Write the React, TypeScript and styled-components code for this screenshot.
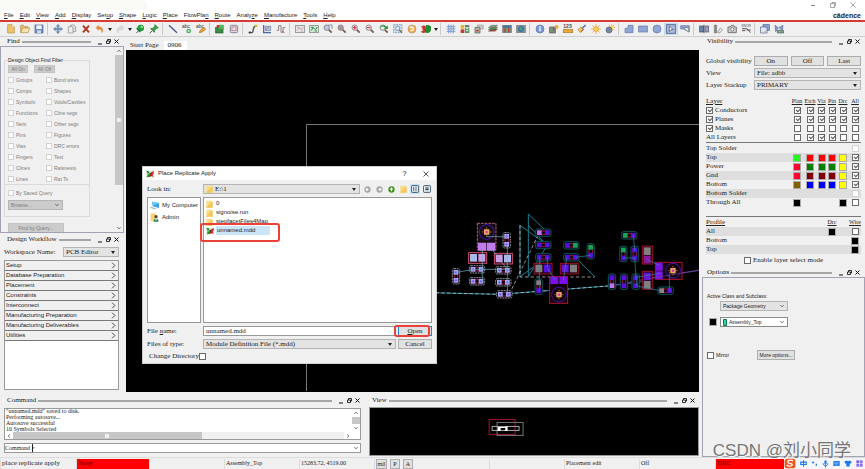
import React from "react";
import styled, { createGlobalStyle, css } from "styled-components";

const serif = `"Liberation Serif", serif`;
const sans = `"Liberation Sans", "Noto Sans CJK SC", sans-serif`;

const GlobalStyle = createGlobalStyle`
  * { box-sizing: border-box; }
  body { margin: 0; background: #f0f0f0; color: #222; font: 7px/9px ${serif}; }
  button, input, select { font: inherit; color: inherit; margin: 0; padding: 0; border-radius: 0; }
  svg { display: block; flex: none; }
`;

/* ---------- shared controls ---------- */

const Page = styled.div`
  position: relative;
  min-height: 100vh;
  display: flex;
  flex-direction: column;
  overflow: hidden;
`;

const Button = styled.button<{ $w?: number; $muted?: boolean }>`
  width: ${(p) => (p.$w ? `${p.$w}px` : "auto")};
  height: 10px;
  line-height: 8px;
  border: 1px solid ${(p) => (p.$muted ? "#c4c4c4" : "#adadad")};
  background: ${(p) => (p.$muted ? "#cccccc" : "#e1e1e1")};
  color: ${(p) => (p.$muted ? "#7c7c7c" : "inherit")};
  text-align: center;
  white-space: nowrap;
`;

const Check = styled.input.attrs({ type: "checkbox" })<{ $faint?: boolean; $size?: number }>`
  appearance: none;
  position: relative;
  flex: none;
  display: block;
  width: ${(p) => p.$size ?? 7}px;
  height: ${(p) => p.$size ?? 7}px;
  border: 1px solid ${(p) => (p.$faint ? "#d2d2d2" : "#6a6a6a")};
  background: #fff;
  &:checked::after {
    content: "";
    position: absolute;
    left: 1px;
    top: 0;
    width: 4px;
    height: 2px;
    border-left: 1px solid #555;
    border-bottom: 1px solid #555;
    transform: rotate(-45deg);
  }
`;

const CheckLabel = styled.label<{ $muted?: boolean }>`
  display: flex;
  align-items: center;
  gap: 2px;
  white-space: nowrap;
  color: ${(p) => (p.$muted ? "#7c7c7c" : "inherit")};
`;

const SelectFrame = styled.div<{ $w?: number; $tone?: "muted" | "white" }>`
  display: flex;
  align-items: center;
  height: 10px;
  padding: 0 3px 0 2px;
  gap: 2px;
  border: 1px solid ${(p) => (p.$tone === "white" ? "#8a8a8a" : "#b4b4b4")};
  background: ${(p) => (p.$tone === "white" ? "#fff" : p.$tone === "muted" ? "#cccccc" : "#e3e3e3")};
  color: ${(p) => (p.$tone === "muted" ? "#7c7c7c" : "inherit")};
  ${(p) => (p.$w ? css`width: ${p.$w}px;` : css`flex: 1; min-width: 0;`)}
`;

const NativeSelect = styled.select`
  appearance: none;
  flex: 1;
  min-width: 0;
  height: 8px;
  line-height: 8px;
  border: 0;
  outline: 0;
  background: transparent;
`;

const Caret = () => (
  <svg width="4" height="3" viewBox="0 0 4 3"><path d="M0 0h4L2 3z" fill="#222" /></svg>
);
const Chevron = ({ dir = "down", size = 4 }: { dir?: "up" | "down" | "left" | "right"; size?: number }) => {
  const d = { down: "M1 3l4 4 4-4", up: "M1 7l4-4 4 4", left: "M7 1L3 5l4 4", right: "M3 1l4 4-4 4" }[dir];
  return <svg width={size} height={size} viewBox="0 0 10 10"><path d={d} fill="none" stroke="#444" strokeWidth={size > 4 ? 1.4 : 2} /></svg>;
};

type DropProps = { label: string; value: string; w?: number; tone?: "muted" | "white"; thin?: boolean; icon?: React.ReactNode };
const DropDown = ({ label, value, w, tone, thin, icon }: DropProps) => (
  <SelectFrame $w={w} $tone={tone}>
    {icon}
    <NativeSelect aria-label={label}><option>{value}</option></NativeSelect>
    {thin ? <Chevron /> : <Caret />}
  </SelectFrame>
);

/* ---------- dock titles ---------- */

const DockBar = styled.header`
  display: flex;
  align-items: center;
  height: 9px;
  padding: 0 5px 0 7px;
  gap: 2px;
`;
const DockName = styled.h2`
  margin: 0;
  font: 7px/9px ${serif};
`;
const DockRule = styled.span`
  flex: 1;
  height: 2px;
  background: #a6a6a6;
  margin-right: 4px;
`;
const DockButton = styled.button`
  width: 6px;
  height: 8px;
  border: 0;
  background: none;
  display: grid;
  place-items: center;
`;
const DockTitle = ({ name }: { name: string }) => (
  <DockBar>
    <DockName>{name}</DockName>
    <DockRule />
    <DockButton aria-label={`Minimize ${name}`}><svg width="4" height="6" viewBox="0 0 4 6"><path d="M0 5h4" stroke="#111" /></svg></DockButton>
    <DockButton aria-label={`Float ${name}`}><svg width="5" height="5" viewBox="0 0 10 10"><path d="M3 4V1h6v5H7M1 4h6v5H1z" fill="none" stroke="#111" strokeWidth="1.7" /></svg></DockButton>
    <DockButton aria-label={`Close ${name}`}><svg width="5" height="5" viewBox="0 0 10 10"><path d="M1 1l8 8M9 1L1 9" stroke="#111" strokeWidth="2" /></svg></DockButton>
  </DockBar>
);

/* ---------- window top ---------- */

const TitleBar = styled.div`
  display: flex;
  justify-content: space-between;
  height: 10px;
  background: #fff;
  padding-right: 9px;
`;
const TitleShade = styled.div`
  width: 148px;
  background: #f9f9f6;
  border-radius: 0 8px 4px 0;
`;
const WindowButtons = styled.div`
  display: flex;
  gap: 14px;
  button { width: 6px; height: 9px; border: 0; background: none; display: grid; place-items: center; }
`;
const MenuBar = styled.nav`
  display: flex;
  align-items: center;
  height: 12px;
  padding: 1px 4px 0;
  gap: 6px;
  background: #fff;
  border-bottom: 2px solid #d63a32;
  font: 6px/9px ${sans};
`;
const MenuItem = styled.button`
  border: 0;
  background: none;
  white-space: nowrap;
`;
const Brand = styled.span`
  margin-left: auto;
  font: bold 7px/8px ${sans};
`;

const menus: [string, string, string][] = [
  ["", "F", "ile"], ["", "E", "dit"], ["", "V", "iew"], ["", "A", "dd"], ["", "D", "isplay"], ["Set", "u", "p"],
  ["", "S", "hape"], ["", "L", "ogic"], ["", "P", "lace"], ["FlowPla", "n", ""], ["", "R", "oute"], ["Analy", "z", "e"],
  ["", "M", "anufacture"], ["", "T", "ools"], ["", "H", "elp"],
];

const Tools = styled.div`
  display: flex;
  align-items: center;
  height: 15px;
  padding-left: 4px;
  border-bottom: 1px solid #cfcfcf;
`;
const ToolGroup = styled.div`
  display: flex;
  align-items: center;
  & + & { border-left: 1px solid #c8c8c8; padding-left: 3px; margin-left: 1px; }
`;
const Tool = styled.button<{ $on?: boolean }>`
  width: 14px;
  height: 12px;
  border: 0;
  background: ${(p) => (p.$on ? "#c4dcf0" : "none")};
  display: grid;
  place-items: center;
`;
const ToolCaret = styled.span`
  width: 6px;
  display: grid;
  place-items: center;
`;

const lens = (fill: string, extra?: React.ReactNode) => (
  <>
    <path d="M17 17l9 9" stroke="#7a5a48" strokeWidth="5" />
    <circle cx="11" cy="11" r="8" fill={fill} stroke="#8e8594" strokeWidth="3" />
    {extra}
  </>
);
const board = (fill: string, extra: React.ReactNode) => (
  <><rect x="2" y="4" width="26" height="22" fill={fill} stroke="#777" strokeWidth="2" />{extra}</>
);

const icons: Record<string, React.ReactNode> = {
  New: <><path d="M5 2h13l7 7v18H5z" fill="#efc36a" stroke="#b98a3c" strokeWidth="2" /><path d="M18 2v8h7" fill="#fff3cf" stroke="#b98a3c" /></>,
  Open: <><path d="M2 25V4h9l3 4h10v5" fill="#e9bd72" stroke="#b28748" strokeWidth="2" /><path d="M2 26l6-14h21l-5 14z" fill="#fbe3ad" stroke="#b28748" strokeWidth="2" /></>,
  Save: <><rect x="3" y="3" width="24" height="24" fill="#6f8fc4" stroke="#46639a" strokeWidth="2" /><path d="M7 4h16v11H7z" fill="#f4f6fb" /><path d="M9 19h12v8H9z" fill="#ced7e8" /></>,
  Move: <path d="M15 1l5 6h-3v6h6v-3l6 5-6 5v-3h-6v6h3l-5 6-5-6h3v-6H7v3l-6-5 6-5v3h6V7h-3z" fill="#6d92b5" stroke="#42688c" />,
  Copy: <><path d="M11 3h10l5 5v15H11z" fill="#ddd" stroke="#888" strokeWidth="2" /><path d="M4 8h10l4 4v15H4z" fill="#eee" stroke="#888" strokeWidth="2" /></>,
  Delete: <path d="M6 5l18 20M24 5L6 25" stroke="#b23a1c" strokeWidth="6" />,
  Undo: <path d="M3 11l8-7v5c12 0 16 8 9 17 1-8-2-11-9-11v4z" fill="#f08c2c" stroke="#c1641a" />,
  Redo: <path d="M27 11l-8-7v5C7 9 3 17 10 26c-1-8 2-11 9-11v4z" fill="#ddd" stroke="#aaa" />,
  "Fix": <><circle cx="17" cy="12" r="10" fill="#1f9c3c" /><circle cx="20" cy="9" r="4" fill="#84dc8c" /><path d="M4 27l8-8" stroke="#555" strokeWidth="3" /><path d="M5 13l11 11" stroke="#17762c" strokeWidth="4" /></>,
  "Unfix": <><path d="M18 2l10 10-6 1-5 6-1 6L5 14l6-1 6-5z" fill="#39a54b" stroke="#19692a" strokeWidth="2" /><path d="M2 28l8-8" stroke="#555" strokeWidth="3" /></>,
  Line: <path d="M3 4l24 22" stroke="#4a5785" strokeWidth="4" />,
  "Add text": <><text x="0" y="13" fontSize="15" fontFamily="Liberation Sans" fill="#333">abc</text><circle cx="20" cy="21" r="7" fill="#3ea55a" /><path d="M16 21h8M20 17v8" stroke="#fff" strokeWidth="2" /></>,
  "Edit text": <><text x="0" y="13" fontSize="15" fontFamily="Liberation Sans" fill="#333">abc</text><path d="M10 26l3-8 11-8 5 6-11 8z" fill="#f2a63c" stroke="#a8661a" strokeWidth="2" /></>,
  "Place part": <><rect x="2" y="10" width="22" height="17" fill="#3b8c42" stroke="#205c28" strokeWidth="2" /><path d="M12 3h14v12H12z" fill="#58b35c" stroke="#2b5" /><rect x="5" y="3" width="7" height="8" fill="#c33" /></>,
  Swap: <><rect x="4" y="4" width="22" height="22" rx="3" fill="#dadde6" stroke="#8088a0" strokeWidth="3" /><rect x="9" y="9" width="12" height="11" fill="#f6e0dc" stroke="#b07070" strokeWidth="2" /></>,
  Connect: <><path d="M4 26h7c8 0 1-19 12-20h4" fill="none" stroke="#555" strokeWidth="4" /><rect x="20" y="2" width="8" height="6" fill="#e4c338" /><rect x="2" y="23" width="7" height="5" fill="#333" /></>,
  Slide: <><path d="M5 3v23h22" fill="none" stroke="#4b6da6" strokeWidth="4" /><path d="M10 7h16v13H10z" fill="#b7c7e3" stroke="#5a78aa" strokeWidth="2" /><path d="M12 17l9-8" stroke="#c44" strokeWidth="2" /></>,
  Tune: <><path d="M2 19h6V5h7v20h6V11h7" fill="none" stroke="#8b8186" strokeWidth="3" /><path d="M18 21l8 5" stroke="#b66" strokeWidth="3" /></>,
  Unrats: board("#e5e5e9", <path d="M6 20l7-9 6 6 6-8M6 10h8M17 21h7" stroke="#b88" strokeWidth="2" fill="none" />),
  Rats: board("#d3ead6", <path d="M6 20l7-9 6 6 6-8M6 10h8M17 21h7" stroke="#2d8b4a" strokeWidth="3" fill="none" />),
  "Zoom points": lens("#b9cbe8", <path d="M16 3h11v12" fill="none" stroke="#568" strokeWidth="2" />),
  "Zoom fit": lens("#a99"),
  "Zoom in": lens("#f1e6e8", <path d="M6 11h10M11 6v10" stroke="#c22" strokeWidth="3" />),
  "Zoom out": lens("#f1e6e8", <path d="M6 11h10" stroke="#c22" strokeWidth="3" />),
  "Zoom previous": lens("#dcefdc", <path d="M2 12C6 2 16 1 25 8l2-5v12H15l4-4C13 6 8 7 2 12z" fill="#33983e" />),
  "Zoom selection": <><rect x="2" y="2" width="25" height="24" fill="#c8dcef" stroke="#59799c" strokeWidth="2" strokeDasharray="5 3" /><circle cx="14" cy="13" r="6" fill="#edf6ff" stroke="#567" strokeWidth="2" /><path d="M19 18l8 8" stroke="#765" strokeWidth="4" /></>,
  Refresh: <><circle cx="15" cy="15" r="12" fill="#f6ad4c" stroke="#b88c60" strokeWidth="2" /><path d="M9 12c3-5 11-3 10 3-1 4-5 5-8 4" fill="none" stroke="#fff" strokeWidth="4" /></>,
  "3D": <><path d="M1 7c8-5 14-3 14 4v14c-5 3-10 2-14 0v-5c4 2 6 0 5-3l-4-2 4-4-5-1z" fill="#c93428" /><path d="M15 3c15 0 17 5 15 12 0 9-5 13-15 12z" fill="#1e8a31" /></>,
  Grid: <path d="M2 8h26M2 15h26M2 22h26M8 2v26M15 2v26M22 2v26" stroke="#7b9bce" strokeWidth="3" />,
  Color: <><path d="M2 3h11v11H2z" fill="#d9bb3a" /><path d="M2 16h11v11H2z" fill="#c33b35" /><path d="M15 3h13v6H15z" fill="#777" /><path d="M15 11h13v16H15z" fill="#4c9a5a" /><path d="M18 14h7M18 20h7" stroke="#eee" strokeWidth="3" /></>,
  Shadow: <><path d="M11 3h17v12H11z" fill="#ccc" stroke="#777" strokeWidth="2" strokeDasharray="3 2" /><path d="M3 10h15v17H3z" fill="#a9b8a2" stroke="#555" strokeWidth="2" /><path d="M6 20h8" stroke="#c33" strokeWidth="4" /></>,
  Stackup: <><path d="M1 22l9-7h19l-8 7z" fill="#b0413a" stroke="#555" /><path d="M1 17l9-7h19l-8 7z" fill="#50935a" stroke="#444" /><path d="M1 11l9-7h19l-8 7z" fill="#879a7b" stroke="#444" /></>,
  Constraint: board("#718a83", <><path d="M3 5h24v6H3z" fill="#4570a0" /><path d="M9 13v12M20 13v12" stroke="#d22" strokeWidth="3" /><path d="M13 13h4v12h-4z" fill="#5bb565" /></>),
  World: board("#8b95a0", <><circle cx="15" cy="15" r="9" fill="#366fae" /><path d="M9 13c4-7 9-4 8 0s5 2 3 6c-5 2-8 0-11-6z" fill="#4dac5e" /></>),
  Info: <><circle cx="15" cy="15" r="12" fill="#7e9bd6" stroke="#5871a8" strokeWidth="2" /><path d="M15 13v9M15 7v4" stroke="#fff" strokeWidth="4" /></>,
  Property: <><rect x="2" y="9" width="17" height="18" fill="#898989" stroke="#555" strokeWidth="2" /><path d="M8 12v12" stroke="#4b4" strokeWidth="4" /><path d="M14 10v12" stroke="#c33" strokeWidth="3" /><path d="M18 4h10v8l-6 3-4-4z" fill="#e5ad32" /></>,
  Measure: <><text x="1" y="12" fontSize="15" fontWeight="bold" fontFamily="Liberation Sans" fill="#444">123</text><rect x="1" y="16" width="28" height="10" fill="#eca73a" stroke="#ae7623" strokeWidth="2" /></>,
  Brush: <><path d="M3 17l8-8 8 8-8 9z" fill="#f0cb58" stroke="#a87e25" strokeWidth="2" /><path d="M15 14L26 3" stroke="#6674ad" strokeWidth="5" /><path d="M12 23l8-8" stroke="#c33" strokeWidth="3" /></>,
  Highlight: <><path d="M15 0v30M0 15h30M4 4l22 22M26 4L4 26" stroke="#e69a28" strokeWidth="2" /><circle cx="15" cy="15" r="7" fill="#ffd64e" stroke="#d88b22" strokeWidth="2" /></>,
  Dehighlight: <><path d="M20 0v22M9 10h21M11 2l17 17M28 2L11 19" stroke="#e69a28" strokeWidth="2" /><circle cx="19" cy="11" r="6" fill="#ffd64e" /><circle cx="12" cy="18" r="9" fill="#7888a3" stroke="#505d76" strokeWidth="2" /></>,
  Polygon: <path d="M3 26V13h9V4h15v22z" fill="#8fa5d5" stroke="#5e75a8" strokeWidth="2" />,
  Rectangle: <rect x="2" y="6" width="26" height="18" fill="#8fa5d5" stroke="#5e75a8" strokeWidth="2" />,
  Circle: <circle cx="15" cy="15" r="12" fill="#8fa5d5" stroke="#5e75a8" strokeWidth="2" />,
  "Select shape": <><rect x="2" y="2" width="26" height="26" fill="#afbede" stroke="#5b6e99" strokeWidth="3" /><path d="M10 6l12 11h-7l-5 6z" fill="#fff" stroke="#345" strokeWidth="2" /></>,
  "Void shape": <><path d="M2 5h26v19L10 15H2z" fill="#8fa5d5" stroke="#5e75a8" strokeWidth="2" /><path d="M9 11h17v13z" fill="#eee" stroke="#677" strokeWidth="2" /></>,
  Split: <><rect x="2" y="6" width="11" height="18" fill="#6d84ac" stroke="#445" strokeWidth="2" /><rect x="18" y="6" width="11" height="18" fill="#8fa5cd" stroke="#556" strokeWidth="2" /><path d="M15 2v26" stroke="#333" strokeWidth="2" /></>,
  Dimension: <><path d="M4 3h7v24H4z" fill="#888" stroke="#555" /><path d="M14 25l8-13 6 5-8 10z" fill="#eee" stroke="#777" strokeWidth="2" /></>,
  Camera: <><path d="M3 9h7l3-5h7l2 5h6v17H3z" fill="#ccc" stroke="#777" strokeWidth="3" /><circle cx="16" cy="16" r="5" fill="#fff" stroke="#777" strokeWidth="3" /></>,
  Netlist: <><text x="1" y="9" fontSize="10" fontFamily="Liberation Sans" fill="#444">XNOR</text><path d="M3 14h12M3 20h10M15 14c8 0 8 11 14 11M17 18h12" stroke="#555" strokeWidth="3" fill="none" /></>,
  Layers: <><rect x="9" y="2" width="19" height="17" fill="#8ba4d0" stroke="#4b6290" strokeWidth="2" /><rect x="2" y="9" width="19" height="18" fill="#e0e6f2" stroke="#4b6290" strokeWidth="2" /><path d="M4 25h14v-4z" fill="#e3b54d" /></>,
  Report: <><path d="M3 4l10 7-8 12zM27 4L15 11l10 8z" fill="#889bc2" stroke="#5b6f99" strokeWidth="2" /><path d="M10 19h19v8H10z" fill="#7fab83" stroke="#557" strokeWidth="2" /></>,
};

const toolGroups = [
  ["New", "Open", "Save"],
  ["Move", "Copy", "Delete", "Undo", "|", "Redo", "|", "Fix", "Unfix"],
  ["Line", "Add text", "Edit text"],
  ["Place part", "Swap"],
  ["Connect", "Slide", "Tune"],
  ["Unrats", "Rats", "Zoom points", "Zoom fit", "Zoom in", "Zoom out", "Zoom previous", "Zoom selection", "Refresh", "3D", "|"],
  ["Grid", "Color", "Shadow", "Stackup", "Constraint", "World"],
  ["Info", "Property", "Measure", "Brush", "Highlight", "Dehighlight"],
  ["Polygon", "Rectangle", "Circle", "Select shape", "Void shape"],
  ["Split", "Dimension", "Camera", "Netlist"],
  ["Layers", "Report"],
];

/* ---------- workspace ---------- */

const Workspace = styled.div`
  flex: 1;
  display: grid;
  grid-template: "left center right" minmax(0, 1fr) "bottom bottom right" 65px / 126px minmax(0, 1fr) 165px;
`;
const LeftDock = styled.aside`
  grid-area: left;
  width: 124px;
`;
const FindBox = styled.section`
  display: flex;
  height: 187px;
  margin-bottom: 2px;
  border: 1px solid #9fa3b3;
  overflow: hidden;
`;
const FindBody = styled.div`
  flex: 1;
  padding: 10px 25px 0 3px;
  font: 5px/8px ${sans};
  color: #7c7c7c;
`;
const Filter = styled.fieldset`
  min-width: 0;
  margin: 0;
  padding: 2px 0 6px 3px;
  border: 1px solid #dadada;
  legend { padding: 0; color: #222; line-height: 6px; }
`;
const FilterButtons = styled.div`
  display: flex;
  gap: 6px;
  margin-bottom: 1px;
  button { height: 8px; line-height: 6px; }
`;
const FilterGrid = styled.div`
  display: grid;
  grid-template-columns: 38px 1fr;
  grid-auto-rows: 11px;
`;
const Query = styled.div`
  margin: 0 0 0 -3px;
  padding: 4px 3px 0;
  border-top: 1px solid #dadada;
  display: grid;
  gap: 3px;
`;
const FindFooter = styled.div`
  padding: 6px 0 0 4px;
`;
const VScroll = styled.div`
  width: 8px;
  display: flex;
  flex-direction: column;
  align-items: center;
  background: #f0f0f0;
  button { width: 8px; height: 8px; border: 0; background: none; display: grid; place-items: center; }
`;
const VTrack = styled.div<{ $fill: number; $plain?: boolean }>`
  flex: 1;
  width: 100%;
  &::before {
    content: "";
    display: block;
    height: ${(p) => p.$fill}%;
    background: ${(p) => (p.$plain ? "#c6c6c6" : "linear-gradient(#f0f0f0, #f0f0f0) center / 4px 4px no-repeat #c6c6c6")};
  }
`;
const WorkName = styled.label`
  display: flex;
  align-items: center;
  padding: 3px 5px 3px 4px;
  justify-content: space-between;
  white-space: nowrap;
`;
const WorkList = styled.ul`
  list-style: none;
  margin: 0 5px 0 4px;
  padding: 0;
  min-height: 130px;
  background: #fff;
  border: 1px solid #999;
  font: 6px/9px ${sans};
`;
const WorkItem = styled.button`
  display: flex;
  align-items: center;
  justify-content: space-between;
  width: 100%;
  height: 10px;
  padding: 0 1px;
  border: 0;
  border-bottom: 1px solid #777;
  background: #f0f0f0;
`;
const filterLeft = ["Groups", "Comps", "Symbols", "Functions", "Nets", "Pins", "Vias", "Fingers", "Clines", "Lines"];
const filterRight = ["Bond wires", "Shapes", "Voids/Cavities", "Cline segs", "Other segs", "Figures", "DRC errors", "Text", "Ratsnests", "Rat Ts"];
const workItems = ["Setup", "Database Preparation", "Placement", "Constraints", "Interconnect", "Manufacturing Preparation", "Manufacturing Deliverables", "Utilities"];

/* ---------- design canvas ---------- */

const Center = styled.main`
  grid-area: center;
  display: flex;
  flex-direction: column;
  margin-right: 1px;
`;
const Tabs = styled.div`
  display: flex;
  align-items: flex-end;
  height: 13px;
`;
const Tab = styled.button<{ $on?: boolean }>`
  height: 9px;
  padding: 0 5px 0 4px;
  border: 0;
  background: ${(p) => (p.$on ? "#fff" : "none")};
`;
const Drawing = styled.svg`
  flex: 1 1 0;
  height: 0;
  width: 100%;
  background: #000;
`;

type PairProps = { x: number; y: number; v?: boolean; a?: string; b?: string; lit?: boolean };
const Pair = ({ x, y, v, a = "#5511dd", b = "#5511dd", lit }: PairProps) => {
  const dx = v ? 0 : 24;
  const dy = v ? 24 : 0;
  const pa = lit ? "#a9a8f5" : a;
  const pb = lit ? "#a9a8f5" : b;
  return (
    <g>
      <rect x={x - 11} y={y - 11} width={dx + 22} height={dy + 22} rx="5" fill="#060611" stroke={lit ? "#8b8d94" : "#0e5558"} strokeWidth="3" strokeDasharray={lit ? "6 2" : undefined} />
      <rect x={x - 5} y={y - 5} width={dx + 10} height={dy + 10} fill="none" stroke="#a01238" strokeWidth="3" />
      <rect x={x - 7} y={y - 7} width="14" height="14" fill={pa} />
      <rect x={x + dx - 7} y={y + dy - 7} width="14" height="14" fill={pb} />
      {lit && <path d={`M${x - 4} ${y}h8M${x} ${y - 4}v8M${x + dx - 4} ${y + dy}h8M${x + dx} ${y + dy - 4}v8`} stroke="#5a3de0" strokeWidth="2" />}
    </g>
  );
};
const BigPair = ({ x, y, v, a, b, lit }: PairProps) => (
  <g>
    <rect x={x} y={y} width={v ? 30 : 54} height={v ? 54 : 32} fill="#180008" stroke={lit ? "#d94f70" : "#a0102c"} strokeWidth="3" />
    <rect x={x + 4} y={y + 4} width="21" height="23" fill={a} />
    <rect x={x + (v ? 4 : 29)} y={y + (v ? 29 : 4)} width="21" height="23" fill={b} />
  </g>
);
const Target = ({ x, y }: { x: number; y: number }) => (
  <g>
    <circle cx={x} cy={y} r="22" fill="none" stroke="#4018b8" strokeWidth="3" />
    <rect x={x - 8} y={y - 8} width="16" height="16" fill="#f2a080" />
    <path d={`M${x - 7} ${y - 7}l14 14m0-14l-14 14M${x - 14} ${y}h28M${x} ${y - 14}v28`} stroke="#e6c829" strokeWidth="2" strokeDasharray="4 2" />
    <circle cx={x} cy={y} r="4" fill="#d040a0" />
  </g>
);

const Layout = () => (
  <Drawing viewBox="126 50 573 341" preserveAspectRatio="xMinYMin meet" role="img" aria-label="Board layout">
    <path d="M306.500 391V124.500H699" fill="none" stroke="#777" />
    <g transform="translate(430 200) scale(.33333)">
      <g fill="none" stroke="#178094" strokeWidth="3">
        <path d="M270 76v155M270 76l84 60M295 42v188M295 42l58 56M295 76l56 60-56 94M270 230l84-60M436 172l58 58" />
        <path d="M0 278l210 5 335-26 90-12" />
      </g>
      <path d="M270 76v155h224M238 282l90-184M0 278l210 5 335-26" fill="none" stroke="#ddd" strokeWidth="2" strokeDasharray="10 7" />
      <path d="M545 257l145-28 120-19" fill="none" stroke="#60439d" strokeWidth="3" />

      <rect x="142" y="70" width="56" height="80" fill="#170b15" stroke="#aa6179" strokeWidth="3" strokeDasharray="8 3" />
      <Target x={170} y={96} />
      <path d="M144 128h25v24h-25zM171 128h25v24h-25z" fill="#c07bef" />
      <BigPair x={116} y={158} a="#a9b9ec" b="#d29be8" lit />
      <BigPair x={193} y={160} a="#d29be8" b="#a9b9ec" lit />
      <Pair x={230} y={109} v lit />
      <Pair x={78} y={217} v lit />
      <Pair x={129} y={208} lit />
      <Pair x={129} y={244} lit />
      <Pair x={208} y={211} lit />
      <Pair x={208} y={247} lit />
      <Pair x={211} y={283} lit />

      <Pair x={328} y={98} a="#bc72ed" />
      <Pair x={328} y={135} />
      <Pair x={328} y={172} />
      <Pair x={412} y={136} b="#12a753" />
      <Pair x={412} y={172} />
      <Pair x={482} y={142} v a="#12a753" />
      <BigPair x={312} y={190} a="#808080" b="#5511dd" />
      <BigPair x={391} y={190} a="#6315dd" b="#808080" />
      <Pair x={326} y={248} v a="#858585" />
      <rect x="359" y="230" width="54" height="80" fill="#150008" stroke="#b0122f" strokeWidth="3" />
      <path d="M361 230h24v22h-24zM388 230h24v22h-24z" fill="#7a12e8" />
      <Target x={387} y={284} />

      <Pair x={586} y={106} a="#12a753" />
      <Pair x={580} y={150} v a="#12a753" />
      <Pair x={614} y={150} v />
      <BigPair x={637} y={138} v a="#808080" b="#8a159f" />
      <Pair x={546} y={233} v b="#b778e9" />
      <Pair x={582} y={233} v />
      <Pair x={617} y={233} v />
      <BigPair x={637} y={214} v a="#6912d8" b="#808080" />
      <Pair x={695} y={272} a="#858585" />
      <rect x="676" y="187" width="80" height="51" fill="#150008" stroke="#b0122f" strokeWidth="3" />
      <path d="M677 188h21v24h-21zM677 214h21v24h-21z" fill="#7a12e8" />
      <Target x={729} y={212} />
      <path d="M650 237l160-26" stroke="#60439d" strokeWidth="2" />
      <g fill="none" stroke="#2a8fb0" strokeWidth="2">
        <path d="M352 172v30M328 172v100M376 240l-23-35M400 240l10-66M436 172l46-6M580 174h34l6 84M610 106l4 44M650 178l38 18M690 220l-72 12M718 272v-56M620 258l70 14" />
        <path d="M78 217l56-9h98M170 110h60M232 130v152M157 150v94M186 148l46 60" stroke="#6fb9c4" />
      </g>
    </g>
  </Drawing>
);

/* ---------- right dock ---------- */

const RightDock = styled.aside`
  grid-area: right;
  display: flex;
  flex-direction: column;
`;
const Visibility = styled.section`
  padding: 9px 4px 4px 6px;
`;
const VisRow = styled.div`
  display: flex;
  align-items: center;
  gap: 5px;
  height: 12px;
`;
const VisName = styled.span`
  width: 43px;
  white-space: nowrap;
`;
const VisButtons = styled.div`
  display: grid;
  grid-template-columns: repeat(3, 1fr);
  gap: 3px;
  flex: 1;
`;
const LayerTable = styled.table<{ $gap?: number }>`
  width: 100%;
  margin-top: ${(p) => p.$gap ?? 0}px;
  border-collapse: collapse;
  table-layout: fixed;
  th, td { padding: 0; height: 9px; line-height: 9px; font-weight: normal; white-space: nowrap; text-align: left; }
  thead th { text-decoration: underline; text-align: center; font-size: 6px; }
  thead th:first-child { text-align: left; font-size: 7px; }
  td input { margin: 0 auto; }
`;
const Stripe = styled.tr<{ $on: boolean }>`
  background: ${(p) => (p.$on ? "#dedede" : "transparent")};
`;
const Rule = styled.hr`
  margin: 0;
  border: 0;
  border-top: 1px solid #777;
  height: 2px;
`;
const Swatch = styled.button<{ $c: string }>`
  display: block;
  width: 8px;
  height: 8px;
  margin: 0 auto;
  border: 1px solid #aaa;
  background: ${(p) => p.$c};
`;
const CenterLine = styled.div`
  display: flex;
  justify-content: center;
  padding: 2px 0 0;
  line-height: 8px;
`;
const OptionBox = styled.section`
  flex: 1;
  margin: 0 0 0 2px;
  padding: 14px 4px 0;
  border: 1px solid #9fa3b3;
  font: 5px/9px ${sans};
`;
const OptionRow = styled.div<{ $top?: number }>`
  display: flex;
  align-items: center;
  gap: 3px;
  margin-top: ${(p) => p.$top ?? 0}px;
  padding-left: 2px;
  button { margin: 0; }
`;
const Slot = styled.span`
  width: 8px;
  height: 8px;
`;
const OptionFoot = styled.div`
  display: flex;
  align-items: center;
  gap: 28px;
  margin-top: 23px;
`;

const layerChecks: [string, boolean, string][] = [
  ["Conductors", true, "111111"], ["Planes", true, "111111"], ["Masks", true, "000000"], ["All Layers", false, "011100"],
];
const G = "#20ff20", R = "#ff0000", C = "#ff0030", D = "#008000", M = "#800000", Y = "#ffff00", B = "#0000ff", O = "#806000", K = "#000";
const layerColors: [string, string[], string][] = [
  ["Top Solder", [], "faint"], ["Top", [G, R, R, R, Y], "on"], ["Power", [C, D, D, D, Y], "on"], ["Gnd", [C, M, M, M, Y], "on"],
  ["Bottom", [O, B, B, B, Y], "on"], ["Bottom Solder", [], "faint"], ["Through All", [K, "", "", "", K], "off"],
];
const Cols = () => (
  <colgroup><col /><col width="14" /><col width="12" /><col width="11" /><col width="10" /><col width="12" /><col width="12" /></colgroup>
);

/* ---------- bottom dock ---------- */

const Bottom = styled.div`
  grid-area: bottom;
  display: grid;
  grid-template-columns: minmax(0, 365fr) minmax(0, 335fr);
  padding-top: 4px;
`;
const Pane = styled.section`
  display: flex;
  flex-direction: column;
  min-width: 0;
`;
const Log = styled.div`
  display: grid;
  grid-template-columns: 1fr 8px;
  margin: 3px 4px 3px 4px;
  height: 32px;
  border: 1px solid #999;
  background: #fff;
`;
const LogText = styled.pre`
  margin: 0;
  height: 23px;
  overflow: hidden;
  display: flex;
  flex-direction: column;
  justify-content: flex-end;
  padding-left: 1px;
  font: 6px/6px ${serif};
`;
const HScroll = styled.div`
  display: flex;
  align-items: center;
  height: 7px;
  button { width: 8px; height: 7px; border: 0; background: #fff; display: grid; place-items: center; }
`;
const HTrack = styled.div`
  flex: 1;
  height: 100%;
  background: #f0f0f0;
  &::before {
    content: "";
    display: block;
    width: 57%;
    height: 100%;
    background: linear-gradient(#f0f0f0, #f0f0f0) center / 4px 4px no-repeat #c6c6c6;
  }
`;
const CommandLine = styled.label`
  display: flex;
  align-items: center;
  height: 10px;
  margin: 0 4px;
  padding-right: 2px;
  border: 1px solid #999;
  background: #fff;
  font-size: 6px;
  line-height: 8px;
  white-space: nowrap;
  span { width: 28px; border-right: 1px solid #222; }
  input { flex: 1; min-width: 0; height: 8px; border: 0; outline: 0; background: none; }
`;
const Preview = styled.svg`
  flex: 1;
  min-height: 0;
  margin: 2px 1px 3px 4px;
  background: #000;
  border: 1px solid #999;
`;

const Status = styled.footer`
  display: grid;
  grid-template-columns: 76fr 73fr 75fr 75fr 75fr 115fr 75fr 75fr 76fr 150fr;
  align-items: center;
  height: 12px;
  border-top: 1px solid #ddd;
`;
const Cell = styled.div<{ $red?: boolean; $small?: boolean }>`
  display: flex;
  align-items: center;
  gap: 3px;
  min-width: 0;
  height: 10px;
  padding-left: 1px;
  border-left: 1px solid #dcdcdc;
  background: ${(p) => (p.$red ? "#ff0000" : "transparent")};
  color: ${(p) => (p.$red ? "#5c0000" : "inherit")};
  font-size: ${(p) => (p.$small ? 6 : 7)}px;
  white-space: nowrap;
`;
const Tray = styled.div`
  display: flex;
  align-items: center;
  gap: 4px;
  margin-left: auto;
  height: 10px;
  padding: 0 2px 0 0;
  background: #f4f6fa;
`;
const Watermark = styled.div`
  position: absolute;
  right: 14px;
  bottom: 8px;
  font: 17px/20px ${sans};
  color: #777;
  text-shadow: 1px 1px 0 #f4f4f4;
  white-space: nowrap;
  pointer-events: none;
`;

/* ---------- file dialog ---------- */

const Dialog = styled.form`
  position: absolute;
  left: 142px;
  top: 166px;
  width: 295px;
  display: flex;
  flex-direction: column;
  background: #f0f0f0;
  border: 1px solid #cfcfcf;
`;
const DialogTitle = styled.header`
  display: flex;
  align-items: center;
  gap: 4px;
  height: 13px;
  padding: 0 7px 0 3px;
  background: #fff;
  font: 6px/9px ${sans};
  button { width: 7px; height: 9px; border: 0; background: none; display: grid; place-items: center; font-size: 8px; }
  span { flex: 1; }
  button + button { margin-left: 10px; }
`;
const DialogBody = styled.div`
  display: grid;
  grid-template-columns: 54px minmax(0, 1fr);
  column-gap: 2px;
  row-gap: 3px;
  align-items: center;
  padding: 4px 4px 3px 4px;
`;
const LookRow = styled.div`
  display: flex;
  align-items: center;
  gap: 2px;
`;
const SmallTool = styled.button<{ $on?: boolean }>`
  width: 10px;
  height: 10px;
  border: 0;
  background: ${(p) => (p.$on ? "#c8e2f8" : "none")};
  display: grid;
  place-items: center;
`;
const FileList = styled.ul`
  list-style: none;
  margin: 0;
  padding: 1px 2px;
  height: 126px;
  background: #fff;
  border: 1px solid #999;
  font: 6px/9px ${sans};
`;
const FileRow = styled.li<{ $tall?: boolean }>`
  display: flex;
  align-items: center;
  gap: 2px;
  height: ${(p) => (p.$tall ? 12 : 9)}px;
  white-space: nowrap;
`;
const FileName = styled.span<{ $on?: boolean }>`
  width: ${(p) => (p.$on ? "54px" : "auto")};
  padding-left: 1px;
  background: ${(p) => (p.$on ? "#cce4f8" : "none")};
`;
const Field = styled.input`
  flex: 1;
  min-width: 0;
  height: 10px;
  padding: 0 2px;
  border: 1px solid #999;
  background: #fff;
`;
const OpenButton = styled(Button)`
  border: 1px solid #2582d0;
`;
const Marked = styled.div`
  position: relative;
`;
const MarkedRow = styled.li`
  position: relative;
`;
const Mark = styled.span<{ $box: string }>`
  position: absolute;
  inset: ${(p) => p.$box};
  border: 2px solid #ec4138;
  border-radius: 3px;
  pointer-events: none;
`;
const CheckRow = styled.div`
  display: flex;
  align-items: center;
  justify-content: space-between;
  width: 53px;
  margin-left: 6px;
  height: 11px;
  padding-bottom: 3px;
  font-size: 7px;
  white-space: nowrap;
`;
const FolderIcon = () => (
  <svg width="7" height="8" viewBox="0 0 21 24"><path d="M1 2h17v3h2v18H1z" fill="#fbdc83" /><path d="M16 6h4v17H1v-2z" fill="#f1c95f" /></svg>
);
const BoardIcon = () => (
  <svg width="8" height="8" viewBox="0 0 24 24"><path d="M1 2h22v20H1z" fill="#dfe6dc" /><path d="M1 2l9 2-3 7 8 9-13 2 3-9z" fill="#1fb02c" /><path d="M14 9l9-7v8l-3 5 3 7-7-4-6 3 1-9z" fill="#df2525" /><path d="M5 5l13 13M8 19l8-12" stroke="#2c2c2c" strokeWidth="2" /></svg>
);
const ComputerIcon = () => (
  <svg width="10" height="9" viewBox="0 0 30 27"><path d="M6 2l21 4v15L8 16z" fill="#38a3e6" /><path d="M6 2l21 4-18 8z" fill="#72c8f5" /><path d="M1 17l18 5-5 3-13-4z" fill="#aab2ba" /></svg>
);
const AdminIcon = () => (
  <svg width="10" height="9" viewBox="0 0 30 27"><path d="M2 1h14v24H2z" fill="#f7d272" /><circle cx="18" cy="11" r="5" fill="#5b4936" /><path d="M11 26c0-13 14-13 15 0z" fill="#2c8068" /><path d="M15 17l3 6 3-6z" fill="#fff" /></svg>
);
const RoundIcon = ({ color, d }: { color: string; d: string }) => (
  <svg width="7" height="7" viewBox="0 0 20 20"><circle cx="10" cy="10" r="9" fill={color} /><path d={d} fill="none" stroke="#fff" strokeWidth="3" /></svg>
);
const ViewIcon = ({ d }: { d: string }) => (
  <svg width="8" height="8" viewBox="0 0 24 24"><rect x="1" y="2" width="22" height="20" rx="3" fill="#e9f1f8" stroke="#35526e" strokeWidth="3" /><path d={d} stroke="#222" strokeWidth="3" /></svg>
);

const OpenDialog = () => (
  <Dialog role="dialog" aria-label="Place Replicate Apply" onSubmit={(e) => e.preventDefault()}>
    <DialogTitle>
      <BoardIcon />
      <span>Place Replicate Apply</span>
      <button type="button" aria-label="Help">?</button>
      <button type="button" aria-label="Close"><svg width="6" height="6" viewBox="0 0 12 12"><path d="M1 1l10 10M11 1L1 11" stroke="#222" strokeWidth="1.500" /></svg></button>
    </DialogTitle>
    <DialogBody>
      <span>Look in:</span>
      <LookRow>
        <DropDown label="Look in" value="E:\1" icon={<FolderIcon />} />
        <SmallTool type="button" aria-label="Back"><RoundIcon color="#a7a7a7" d="M13 10H6m4-4l-4 4 4 4" /></SmallTool>
        <SmallTool type="button" aria-label="Forward"><RoundIcon color="#a7a7a7" d="M7 10h7m-4-4l4 4-4 4" /></SmallTool>
        <SmallTool type="button" aria-label="Parent"><RoundIcon color="#3f8f1c" d="M10 15V6m-4 4l4-4 4 4" /></SmallTool>
        <SmallTool type="button" aria-label="New folder"><FolderIcon /></SmallTool>
        <SmallTool type="button" aria-label="List view" $on><ViewIcon d="M6 9h4m3 0h4M6 15h4m3 0h4" /></SmallTool>
        <SmallTool type="button" aria-label="Detail view"><ViewIcon d="M7 9h10M7 14h10" /></SmallTool>
      </LookRow>
      <FileList>
        <FileRow $tall><ComputerIcon />My Computer</FileRow>
        <FileRow $tall><AdminIcon />Admin</FileRow>
      </FileList>
      <FileList>
        <FileRow><FolderIcon /><FileName>0</FileName></FileRow>
        <FileRow><FolderIcon /><FileName>signoise.run</FileName></FileRow>
        <FileRow><FolderIcon /><FileName>stepfacetFiles4Map</FileName></FileRow>
        <MarkedRow>
          <FileRow as="div"><BoardIcon /><FileName $on>unnamed.mdd</FileName></FileRow>
          <Mark $box="-3px 149px -7px -6px" />
        </MarkedRow>
      </FileList>
      <label htmlFor="file-name">File <u>n</u>ame:</label>
      <LookRow>
        <Field id="file-name" defaultValue="unnamed.mdd" />
        <Marked>
          <OpenButton $w={34}><u>O</u>pen</OpenButton>
          <Mark $box="-1px 2px -1px -4px" />
        </Marked>
      </LookRow>
      <span>Files of type:</span>
      <LookRow>
        <DropDown label="Files of type" value="Module Definition File (*.mdd)" />
        <Button type="button" $w={34}>Cancel</Button>
      </LookRow>
    </DialogBody>
    <CheckRow>
      <label htmlFor="change-dir">Change Directory</label>
      <Check id="change-dir" />
    </CheckRow>
  </Dialog>
);

/* ---------- page ---------- */

const VisSpace = styled.div`
  height: 9px;
`;
const LogScroll = styled(VScroll)`
  height: 23px;
  background: #fff;
`;

export default function App() {
  return (
    <Page>
      <GlobalStyle />
      <TitleBar>
        <TitleShade />
        <WindowButtons>
          <button aria-label="Minimize"><svg width="6" height="6" viewBox="0 0 6 6"><path d="M1 3.500h4" stroke="#888" /></svg></button>
          <button aria-label="Restore"><svg width="6" height="6" viewBox="0 0 12 12"><path d="M4 3V1h7v7H9M1 3h8v8H1z" fill="none" stroke="#888" strokeWidth="1.500" /></svg></button>
          <button aria-label="Close"><svg width="6" height="6" viewBox="0 0 12 12"><path d="M1 1l10 10M11 1L1 11" stroke="#888" strokeWidth="1.500" /></svg></button>
        </WindowButtons>
      </TitleBar>
      <MenuBar>
        {menus.map(([a, u, b]) => <MenuItem key={a + u + b}>{a}<u>{u}</u>{b}</MenuItem>)}
        <Brand>cādence</Brand>
      </MenuBar>
      <Tools>
        {toolGroups.map((group, i) => (
          <ToolGroup key={i}>
            {group.map((name, j) =>
              name === "|" ? <ToolCaret key={j}><Caret /></ToolCaret> : (
                <Tool key={j} aria-label={name} $on={name === "Select shape"}>
                  <svg width="10" height="10" viewBox="0 0 30 30">{icons[name]}</svg>
                </Tool>
              )
            )}
          </ToolGroup>
        ))}
      </Tools>

      <Workspace>
        <LeftDock>
          <DockTitle name="Find" />
          <FindBox>
            <FindBody>
              <Filter>
                <legend>Design Object Find Filter</legend>
                <FilterButtons>
                  <Button $w={20} $muted>All On</Button>
                  <Button $w={21} $muted>All Off</Button>
                </FilterButtons>
                <FilterGrid>
                  {filterLeft.map((name, i) => (
                    <React.Fragment key={name}>
                      <CheckLabel $muted><Check $faint $size={6} />{name}</CheckLabel>
                      <CheckLabel $muted><Check $faint $size={6} />{filterRight[i]}</CheckLabel>
                    </React.Fragment>
                  ))}
                </FilterGrid>
                <Query>
                  <CheckLabel $muted><Check $faint $size={6} />By Saved Query</CheckLabel>
                  <DropDown label="Saved query" value="Browse..." w={55} tone="muted" thin />
                </Query>
              </Filter>
              <FindFooter><Button $w={56} $muted>Find by Query...</Button></FindFooter>
            </FindBody>
            <VScroll>
              <button aria-label="Scroll up"><Chevron dir="up" /></button>
              <VTrack $fill={77} />
              <button aria-label="Scroll down"><Chevron /></button>
            </VScroll>
          </FindBox>
          <DockTitle name="Design Workflow" />
          <WorkName>Workspace Name: <DropDown label="Workspace Name" value="PCB Editor" w={56} /></WorkName>
          <WorkList>
            {workItems.map((name) => <li key={name}><WorkItem>{name}<Chevron dir="right" size={7} /></WorkItem></li>)}
          </WorkList>
        </LeftDock>

        <Center>
          <Tabs><Tab>Start Page</Tab><Tab $on>0906</Tab></Tabs>
          <Layout />
        </Center>

        <RightDock>
          <DockTitle name="Visibility" />
          <Visibility>
            <VisRow>
              <VisName>Global visibility</VisName>
              <VisButtons><Button>On</Button><Button>Off</Button><Button>Last</Button></VisButtons>
            </VisRow>
            <VisRow><VisName>View</VisName><DropDown label="View" value="File: adbb" /></VisRow>
            <VisRow><VisName>Layer Stackup</VisName><DropDown label="Layer Stackup" value="PRIMARY" /></VisRow>
            <LayerTable $gap={6}>
              <Cols />
              <thead><tr>{["Layer", "Plan", "Etch", "Via", "Pin", "Drc", "All"].map((h) => <th key={h} scope="col">{h}</th>)}</tr></thead>
              <tbody>
                {layerChecks.map(([name, own, bits]) => (
                  <tr key={name}>
                    <th scope="row">{own ? <CheckLabel><Check defaultChecked />{name}</CheckLabel> : name}</th>
                    {[...bits].map((b, i) => <td key={i}><Check aria-label={`${name} ${i + 1}`} defaultChecked={b === "1"} /></td>)}
                  </tr>
                ))}
              </tbody>
            </LayerTable>
            <Rule />
            <LayerTable>
              <Cols />
              <tbody>
                {layerColors.map(([name, colors, all], r) => (
                  <Stripe key={name} $on={r % 2 === 1}>
                    <th scope="row">{name}</th>
                    {[0, 1, 2, 3, 4].map((i) => <td key={i}>{colors[i] ? <Swatch $c={colors[i]} aria-label={`${name} colour ${i + 1}`} /> : null}</td>)}
                    <td><Check aria-label={`${name} all`} $faint={all === "faint"} defaultChecked={all === "on"} /></td>
                  </Stripe>
                ))}
              </tbody>
            </LayerTable>
            <VisSpace />
            <Rule />
            <LayerTable>
              <Cols />
              <thead><tr><th scope="col">Profile</th><th /><th /><th /><th scope="col">Drc</th><th /><th scope="col">Wire</th></tr></thead>
              <tbody>
                {["All", "Bottom", "Top"].map((name, r) => (
                  <Stripe key={name} $on={r % 2 === 0}>
                    <th scope="row">{name}</th><td /><td /><td />
                    <td>{r === 0 ? <Swatch $c="#000" aria-label="All Drc colour" /> : null}</td><td />
                    <td>{r === 0 ? <Check aria-label="All wire" /> : <Swatch $c="#000" aria-label={`${name} wire colour`} />}</td>
                  </Stripe>
                ))}
              </tbody>
            </LayerTable>
            <CenterLine><CheckLabel><Check />Enable layer select mode</CheckLabel></CenterLine>
          </Visibility>
          <DockTitle name="Options" />
          <OptionBox>
            <div>Active Class and Subclass:</div>
            <OptionRow><Slot /><DropDown label="Active class" value="Package Geometry" w={68} thin /></OptionRow>
            <OptionRow $top={6}>
              <Swatch $c="#000" aria-label="Subclass colour" />
              <DropDown label="Active subclass" value="Assembly_Top" w={68} tone="white" thin
                icon={<svg width="4" height="7" viewBox="0 0 4 7"><path d="M.5.5h3v6h-3z" fill="#25d6b0" stroke="#174" /></svg>} />
            </OptionRow>
            <OptionFoot>
              <CheckLabel><Check />Mirror</CheckLabel>
              <Button $w={38}>More options...</Button>
            </OptionFoot>
          </OptionBox>
        </RightDock>

        <Bottom>
          <Pane>
            <DockTitle name="Command" />
            <Log>
              <div>
                <LogText>{`"unnamed.mdd" saved to disk.\nPerforming autosave...\nAutosave successful\n10 Symbols Selected`}</LogText>
                <HScroll>
                  <button aria-label="Scroll left"><Chevron dir="left" /></button>
                  <HTrack />
                  <button aria-label="Scroll right"><Chevron dir="right" /></button>
                </HScroll>
              </div>
              <LogScroll>
                <button aria-label="Scroll log up"><Chevron dir="up" /></button>
                <VTrack $fill={100} $plain />
                <button aria-label="Scroll log down"><Chevron /></button>
              </LogScroll>
            </Log>
            <CommandLine><span>Command &gt;</span><input aria-label="Command" /><Chevron /></CommandLine>
          </Pane>
          <Pane>
            <DockTitle name="View" />
            <Preview viewBox="370 408 329 47" preserveAspectRatio="xMidYMid meet" role="img" aria-label="Board overview">
              <rect x="489.500" y="419.500" width="26" height="15" fill="none" stroke="#a5122c" />
              <rect x="497.500" y="422.500" width="26" height="13" fill="none" stroke="#777" />
              <rect x="492.500" y="426.500" width="27" height="4" fill="none" stroke="#aaa" />
              <path d="M498 427h7l3-1v5h-3l1-3h-5v3h-3z" fill="#fff" />
            </Preview>
          </Pane>
        </Bottom>
      </Workspace>

      <Status>
        <Cell>place replicate apply</Cell>
        <Cell $red>Busy</Cell>
        <Cell />
        <Cell $small>Assembly_Top</Cell>
        <Cell $small>15283.72, 4519.00</Cell>
        <Cell $small><Button $w={11}>mil</Button><Button $w={10}>P</Button><Button $w={10}>A</Button></Cell>
        <Cell />
        <Cell $small>Placement edit</Cell>
        <Cell $small>Off</Cell>
        <Cell $red>
          DRC
          <Tray>
            <svg width="12" height="11" viewBox="0 0 36 33"><rect x="2" y="2" width="32" height="29" rx="8" fill="#f2541b" /><path d="M27 9c-8-5-20-1-14 5 4 4 14 2 11 8-3 4-12 3-16-1" fill="none" stroke="#fff" strokeWidth="4" /></svg>
            <svg width="7" height="7" viewBox="0 0 20 20"><path d="M2 6h16v7H2zM10 1v18" fill="none" stroke="#1976e8" strokeWidth="3" /></svg>
            <svg width="7" height="7" viewBox="0 0 20 20"><circle cx="6" cy="7" r="3" fill="#1976e8" /><path d="M13 11h4c1 4-1 6-3 7z" fill="#1976e8" /></svg>
            <svg width="7" height="8" viewBox="0 0 20 24"><rect x="7" y="1" width="6" height="13" rx="3" fill="#1976e8" /><path d="M3 10c0 10 14 10 14 0M10 17v6" fill="none" stroke="#1976e8" strokeWidth="3" /></svg>
            <svg width="7" height="7" viewBox="0 0 20 20"><rect x="1" y="3" width="18" height="14" fill="#1976e8" /><path d="M4 7h12M4 10h12M6 14h8" stroke="#fff" strokeWidth="1.500" strokeDasharray="2 1" /></svg>
            <svg width="8" height="7" viewBox="0 0 24 20"><path d="M1 5l7-4c2 3 6 3 8 0l7 4-3 6-3-2v10H7V9l-3 2z" fill="#1976e8" /></svg>
            <svg width="7" height="7" viewBox="0 0 20 20"><path d="M1 1h8v8H1z" fill="#7b5be0" /><path d="M11 1h8v8h-8zM1 11h8v8H1zM11 11h8v8h-8z" fill="#8a70e8" /></svg>
          </Tray>
        </Cell>
      </Status>
      <Watermark>CSDN @刘小同学</Watermark>
      <OpenDialog />
    </Page>
  );
}
